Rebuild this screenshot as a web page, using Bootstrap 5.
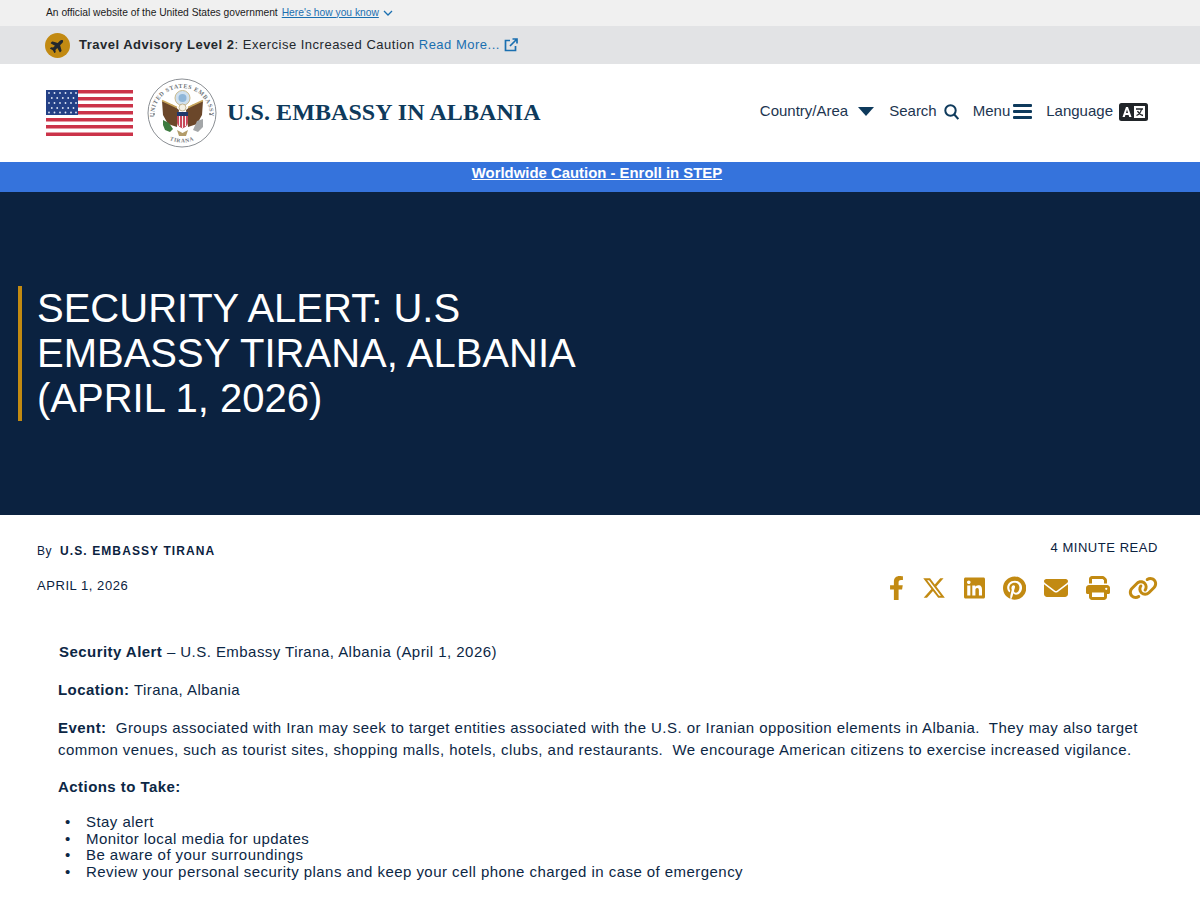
<!DOCTYPE html>
<html lang="en">
<head>
    <meta charset="UTF-8" />
    <meta name="viewport" content="width=device-width, initial-scale=1" />
    <title>Security Alert - U.S. Embassy in Albania</title>
    <link href="https://cdn.jsdelivr.net/npm/bootstrap@5.3.0/dist/css/bootstrap.min.css" rel="stylesheet">
    <style>
        body {
            font-family: "Liberation Sans", Arial, sans-serif;
            color: #0b2240;
            background: #fff;
        }
        a { color: inherit; }
        .gov-strip {
            height: 26px;
            padding-left: 46px;
            padding-bottom: 1px;
            background: #f0f0f0;
            font-size: 10.25px;
            color: #1b1b1b;
        }
        .gov-strip a { color: #1a6fb0; margin-left: 4px; }
        .advisory {
            height: 38px;
            padding-left: 45px;
            background: #e2e3e5;
            font-size: 13px;
            letter-spacing: .5px;
            color: #23282d;
        }
        .advisory-dot {
            width: 25px;
            height: 25px;
            border-radius: 50%;
            background: #c28a12;
            margin-right: 9px;
        }
        .advisory a { color: #1a6fb0; text-decoration: none; margin-left: 4px; }
        .site-head { height: 98px; padding: 0 52px 0 46px; }
        .seal { margin-left: 14px; margin-right: 10px; }
        .site-name {
            font-family: "Liberation Serif", "Times New Roman", serif;
            font-weight: 700;
            font-size: 24px;
            letter-spacing: .08px;
            color: #0e3a5c;
            margin-bottom: 2px;
        }
        .head-links { font-size: 15px; color: #1d3550; margin-top: -3px; }
        .head-links span { white-space: nowrap; }
        .ico-caret { margin: 0 15px 0 10px; }
        .ico-search { margin: 0 14px 0 7px; }
        .ico-menu { margin: 0 14px 0 3px; }
        .ico-lang { margin-left: 6px; }
        .alert-strip {
            height: 30px;
            background: #3573dc;
            color: #fff;
            font-size: 14.9px;
            font-weight: 700;
            padding: 0 6px 8px 0;
        }
        .hero {
            height: 323px;
            background: #0b2240;
            padding-left: 18px;
        }
        .hero-title {
            width: 580px;
            margin: 0;
            padding: 0 0 0 15px;
            border-left: 4px solid #c28a12;
            font-size: 40px;
            line-height: 45px;
            font-weight: 400;
            color: #fff;
        }
        .meta-wrap { padding: 23px 42px 0 37px; height: 126px; font-size: 13px; letter-spacing: .55px; }
        .meta-by { font-size: 12px; margin-top: 4px; }
        .meta-by b { letter-spacing: 1.1px; margin-left: 4px; }
        .meta-date { margin-top: 16px; }
        .share { gap: 0 18px; margin-top: 18px; }
        .share svg { fill: #c28a12; height: 24px; display: block; }
        .alert-copy {
            padding: 0 58px;
            font-size: 15px;
            line-height: 22px;
            letter-spacing: .45px;
            color: #0c2745;
        }
        .alert-copy p { margin: 0 0 16px; }
        .alert-copy .lead-in { padding-left: 1px; margin-bottom: 15.5px; }
        .alert-copy .event-para { margin-bottom: 15px; }
        .alert-copy .list-head { margin-bottom: 16.5px; }
        .alert-copy ul { margin: 0; padding-left: 28px; line-height: 16.7px; list-style: none; }
        .alert-copy li::before { content: "•"; display: inline-block; width: 21px; margin-left: -21px; }
    </style>
</head>
<body>

<div class="gov-strip d-flex align-items-center">
    <span>An official website of the United States government</span>
    <a href="#">Here's how you know</a>
    <svg class="ms-1" width="10" height="6" viewBox="0 0 10 6"><path d="M1 1l4 4 4-4" fill="none" stroke="#1a6fb0" stroke-width="1.3"/></svg>
</div>

<div class="advisory d-flex align-items-center">
    <div class="advisory-dot d-flex align-items-center justify-content-center">
        <svg width="15" height="15" viewBox="0 0 576 512" fill="#23282d"><path transform="rotate(-45 288 256)" d="M482.3 192c34.2 0 93.7 29 93.7 64c0 36-59.5 64-93.7 64l-116.6 0L265.2 495.9c-5.7 10-16.3 16.1-27.8 16.1l-56.2 0c-10.6 0-18.3-10.2-15.4-20.4l49-171.6L112 320 68.8 377.6c-3 4-7.8 6.4-12.8 6.4l-42 0c-7.8 0-14-6.3-14-14c0-1.3 .2-2.6 .5-3.9L32 256 .5 145.9c-.4-1.3-.5-2.6-.5-3.9c0-7.8 6.3-14 14-14l42 0c5 0 9.8 2.4 12.8 6.4L112 192l102.9 0-49-171.6C162.9 10.2 170.6 0 181.2 0l56.2 0c11.5 0 22.1 6.2 27.8 16.1L365.7 192l116.6 0z"/></svg>
    </div>
    <span><b>Travel Advisory Level 2</b>: Exercise Increased Caution</span>
    <a href="#">Read More...</a>
    <svg class="ms-1" width="14" height="14" viewBox="0 0 14 14" fill="none" stroke="#1a6fb0" stroke-width="1.7"><path d="M6 2.5H1.500v10h10V8M8.500 1H13v4.500M13 1L6 8"/></svg>
</div>

<header class="site-head d-flex align-items-center justify-content-between">
    <div class="d-flex align-items-center">
        <svg width="87" height="46" viewBox="0 0 87 46">
            <rect width="87" height="46" fill="#fff"/>
            <g fill="#cb3349">
                <rect y="0" width="87" height="3.500"/>
                <rect y="7" width="87" height="3.500"/>
                <rect y="14" width="87" height="3.500"/>
                <rect y="21" width="87" height="3.500"/>
                <rect y="28" width="87" height="3.500"/>
                <rect y="35" width="87" height="3.500"/>
                <rect y="42.500" width="87" height="3.500"/>
            </g>
            <rect width="32" height="25" fill="#234086"/>
            <g fill="#dfe6f5">
                <circle cx="3" cy="3" r=".9"/><circle cx="8.500" cy="3" r=".9"/><circle cx="14" cy="3" r=".9"/><circle cx="19.500" cy="3" r=".9"/><circle cx="25" cy="3" r=".9"/><circle cx="30" cy="3" r=".9"/>
                <circle cx="5.800" cy="8" r=".9"/><circle cx="11.200" cy="8" r=".9"/><circle cx="16.800" cy="8" r=".9"/><circle cx="22.200" cy="8" r=".9"/><circle cx="27.500" cy="8" r=".9"/>
                <circle cx="3" cy="13" r=".9"/><circle cx="8.500" cy="13" r=".9"/><circle cx="14" cy="13" r=".9"/><circle cx="19.500" cy="13" r=".9"/><circle cx="25" cy="13" r=".9"/><circle cx="30" cy="13" r=".9"/>
                <circle cx="5.800" cy="18" r=".9"/><circle cx="11.200" cy="18" r=".9"/><circle cx="16.800" cy="18" r=".9"/><circle cx="22.200" cy="18" r=".9"/><circle cx="27.500" cy="18" r=".9"/>
                <circle cx="3" cy="22.500" r=".9"/><circle cx="8.500" cy="22.500" r=".9"/><circle cx="14" cy="22.500" r=".9"/><circle cx="19.500" cy="22.500" r=".9"/><circle cx="25" cy="22.500" r=".9"/><circle cx="30" cy="22.500" r=".9"/>
            </g>
        </svg>
        <svg class="seal" width="70" height="70" viewBox="0 0 70 70">
            <circle cx="35" cy="35" r="34" fill="#fff" stroke="#8b8f94" stroke-width="1"/>
            <defs>
                <path id="seal-top" d="M7 38a28 28 0 0 1 56 0"/>
                <path id="seal-bot" d="M20 60.500a30 30 0 0 0 30 0"/>
            </defs>
            <text font-family="Liberation Serif, serif" font-size="6" font-weight="700" fill="#70757a" letter-spacing=".6"><textPath href="#seal-top" startOffset="50%" text-anchor="middle">UNITED STATES EMBASSY</textPath></text>
            <text font-family="Liberation Serif, serif" font-size="5.500" font-weight="700" fill="#70757a" letter-spacing=".6"><textPath href="#seal-bot" startOffset="50%" text-anchor="middle">TIRANA</textPath></text>
            <circle cx="35.500" cy="20" r="7.500" fill="#cfe0ef" stroke="#c9b98c" stroke-width="1"/>
            <circle cx="35.500" cy="20" r="4" fill="#8fb6d8"/>
            <path d="M32 32L26 27 15 23 16 37 21 46 30 49zM39 32L45 27 56 23 55 37 50 46 41 49z" fill="#6b472a"/>
            <path d="M15 22.500l15 7M56 22.500l-15 7" stroke="#c7a55c" stroke-width="1.600"/>
            <circle cx="35.500" cy="29.500" r="3.500" fill="#f4f1e6" stroke="#a88e55" stroke-width=".6"/>
            <path d="M30 34h11v10c0 3.500-3 5.500-5.500 6.500-2.500-1-5.500-3-5.500-6.500z" fill="#c9485a"/>
            <path d="M30 34h11v4H30z" fill="#20386b"/>
            <path d="M32.500 38v10M35.500 38v12M38.500 38v10" stroke="#f3f3f3" stroke-width="1"/>
            <path d="M16 42l6 3 4 6-3 3-5-2-2-5z" fill="#3d7a3f"/>
            <path d="M46 52l4-9 6-2 0 8-5 5z" fill="#a3a6a8"/>
            <path d="M30 52l5.500 3 5.500-3-2 6h-7z" fill="#b39c6a"/>
            <circle cx="7" cy="36" r=".9" fill="#70757a"/><circle cx="63" cy="36" r=".9" fill="#70757a"/>
        </svg>
        <div class="site-name">U.S. EMBASSY IN ALBANIA</div>
    </div>
    <div class="head-links d-flex align-items-center">
        <span>Country/Area</span>
        <svg class="ico-caret" width="16" height="9" viewBox="0 0 16 9" fill="#0e3a5c"><path d="M0 0h16L8 9z"/></svg>
        <span>Search</span>
        <svg class="ico-search" width="15" height="16" viewBox="0 0 15 16" fill="none" stroke="#0e3a5c" stroke-width="2"><circle cx="6.500" cy="6.500" r="5.200"/><path d="M10.300 10.500l4 4.500"/></svg>
        <span>Menu</span>
        <svg class="ico-menu" width="19" height="15" viewBox="0 0 19 15" fill="#0e3a5c"><rect width="19" height="3" rx="1"/><rect y="6" width="19" height="3" rx="1"/><rect y="12" width="19" height="3" rx="1"/></svg>
        <span>Language</span>
        <svg class="ico-lang" width="29" height="18" viewBox="0 0 29 18">
            <rect width="29" height="18" rx="2.500" fill="#212529"/>
            <rect x="15" y="3" width="11" height="12" fill="#fff"/>
            <path d="M3.500 14L7 4h2l3.500 10h-2.300l-.6-2H6.400l-.6 2zM7 10h2L8 6.500z" fill="#fff" fill-rule="evenodd"/>
            <path d="M17 6h7M22.500 6c-.5 3-2.500 5.500-5 6.500M18.500 8c1 2 3 4 5.500 4.500" fill="none" stroke="#212529" stroke-width="1.300"/>
        </svg>
    </div>
</header>

<div class="alert-strip d-flex align-items-center justify-content-center">
    <a href="#">Worldwide Caution - Enroll in STEP</a>
</div>

<section class="hero d-flex align-items-center">
    <h1 class="hero-title">SECURITY ALERT: U.S EMBASSY TIRANA, ALBANIA (APRIL 1, 2026)</h1>
</section>

<div class="meta-wrap d-flex justify-content-between">
    <div>
        <div class="meta-by">By <b>U.S. EMBASSY TIRANA</b></div>
        <div class="meta-date">APRIL 1, 2026</div>
    </div>
    <div class="text-end">
        <div>4 MINUTE READ</div>
        <div class="share d-flex align-items-center justify-content-end">
            <svg viewBox="0 0 320 512"><path d="M279.14 288l14.22-92.66h-88.91v-60.13c0-25.35 12.42-50.06 52.24-50.06h40.42V6.26S260.43 0 225.36 0c-73.22 0-121.08 44.38-121.08 124.72v70.62H22.89V288h81.39v224h100.17V288z"/></svg>
            <svg viewBox="0 0 512 512"><path d="M389.2 48h70.6L305.6 224.2 487 464H345L233.7 318.6 106.5 464H35.8L200.7 275.5 26.8 48H172.4L272.9 180.9 389.2 48zM364.4 421.8h39.1L151.1 88h-42L364.4 421.8z"/></svg>
            <svg viewBox="0 0 448 512"><path d="M416 32H31.9C14.3 32 0 46.5 0 64.3v383.4C0 465.5 14.3 480 31.9 480H416c17.6 0 32-14.5 32-32.3V64.3c0-17.8-14.4-32.3-32-32.3zM135.4 416H69V202.2h66.5V416zm-33.2-243c-21.3 0-38.5-17.3-38.5-38.5S80.9 96 102.2 96c21.2 0 38.5 17.3 38.5 38.5 0 21.3-17.2 38.5-38.5 38.5zm282.1 243h-66.4V312c0-24.8-.5-56.7-34.5-56.7-34.6 0-39.9 27-39.9 54.9V416h-66.4V202.2h63.7v29.2h.9c8.9-16.8 30.6-34.5 62.9-34.5 67.2 0 79.7 44.3 79.7 101.9V416z"/></svg>
            <svg viewBox="0 0 496 512"><path d="M496 256c0 137-111 248-248 248-25.6 0-50.2-3.9-73.4-11.1 10.1-16.5 25.2-43.5 30.8-65 3-11.6 15.4-59 15.4-59 8.1 15.4 31.7 28.5 56.8 28.5 74.8 0 128.7-68.8 128.7-154.3 0-81.9-66.9-143.2-152.9-143.2-107 0-163.9 71.8-163.9 150.1 0 36.4 19.4 81.7 50.3 96.1 4.7 2.2 7.2 1.2 8.3-3.3.8-3.4 5-20.3 6.9-28.1.6-2.5.3-4.7-1.7-7.1-10.1-12.5-18.3-35.3-18.3-56.6 0-54.7 41.4-107.6 112-107.6 60.9 0 103.6 41.5 103.6 100.9 0 67.1-33.9 113.6-78 113.6-24.3 0-42.6-20.1-36.7-44.8 7-29.5 20.5-61.3 20.5-82.6 0-19-10.2-34.9-31.4-34.9-24.9 0-44.9 25.7-44.9 60.2 0 22 7.4 36.8 7.4 36.8s-24.5 103.8-29 123.2c-5 21.4-3 51.6-.9 71.2C65.4 450.9 0 361.1 0 256 0 119 111 8 248 8s248 111 248 248z"/></svg>
            <svg viewBox="0 0 512 512"><path d="M48 64C21.5 64 0 85.5 0 112c0 15.1 7.1 29.3 19.2 38.4L236.8 313.6c11.4 8.5 27 8.5 38.4 0L492.8 150.4c12.1-9.1 19.2-23.3 19.2-38.4c0-26.5-21.5-48-48-48H48zM0 176V384c0 35.3 28.7 64 64 64H448c35.3 0 64-28.7 64-64V176L294.4 339.2c-22.8 17.1-54 17.1-76.8 0L0 176z"/></svg>
            <svg viewBox="0 0 512 512"><path d="M128 0C92.7 0 64 28.7 64 64v96h64V64H354.7L384 93.3V160h64V93.3c0-17-6.7-33.3-18.7-45.3L400 18.7C388 6.7 371.7 0 354.7 0H128zM384 352v32 64H128V384 368 352H384zm64 32h32c17.7 0 32-14.3 32-32V256c0-35.3-28.7-64-64-64H64c-35.3 0-64 28.7-64 64v96c0 17.7 14.3 32 32 32H64v64c0 35.3 28.7 64 64 64H384c35.3 0 64-28.7 64-64V384zM432 248a24 24 0 1 1 0 48 24 24 0 1 1 0-48z"/></svg>
            <svg viewBox="0 0 640 512"><path d="M579.8 267.7c56.5-56.5 56.5-148 0-204.5c-50-50-128.8-56.5-186.3-15.4l-1.6 1.1c-14.4 10.3-17.7 30.3-7.4 44.6s30.3 17.7 44.6 7.4l1.6-1.1c32.1-22.9 76-19.3 103.8 8.6c31.5 31.5 31.5 82.5 0 114L422.3 334.8c-31.5 31.5-82.5 31.5-114 0c-27.9-27.9-31.5-71.8-8.6-103.8l1.1-1.6c10.3-14.4 6.9-34.4-7.4-44.6s-34.4-6.9-44.6 7.4l-1.1 1.6C206.5 251.2 213 330 263 380c56.5 56.5 148 56.5 204.5 0L579.8 267.7zM60.2 244.3c-56.5 56.5-56.5 148 0 204.5c50 50 128.8 56.5 186.3 15.4l1.6-1.1c14.4-10.3 17.7-30.3 7.4-44.6s-30.3-17.7-44.6-7.4l-1.6 1.1c-32.1 22.9-76 19.3-103.8-8.6C74 372 74 321 105.5 289.5L217.7 177.2c31.5-31.5 82.500-31.5 114 0c27.9 27.9 31.5 71.8 8.6 103.9l-1.1 1.6c-10.3 14.4-6.9 34.4 7.4 44.6s34.4 6.9 44.6-7.4l1.1-1.6C433.5 260.8 427 182 377 132c-56.5-56.5-148-56.5-204.5 0L60.2 244.3z"/></svg>
        </div>
    </div>
</div>

<main class="alert-copy">
    <p class="lead-in"><b>Security Alert</b> – U.S. Embassy Tirana, Albania (April 1, 2026)</p>
    <p><b>Location:</b> Tirana, Albania</p>
    <p class="event-para"><b>Event:</b>&nbsp; Groups associated with Iran may seek to target entities associated with the U.S. or Iranian opposition elements in Albania.&nbsp; They may also target common venues, such as tourist sites, shopping malls, hotels, clubs, and restaurants.&nbsp; We encourage American citizens to exercise increased vigilance.</p>
    <p class="list-head"><b>Actions to Take:</b></p>
    <ul>
        <li>Stay alert</li>
        <li>Monitor local media for updates</li>
        <li>Be aware of your surroundings</li>
        <li>Review your personal security plans and keep your cell phone charged in case of emergency</li>
    </ul>
</main>

<script src="https://cdn.jsdelivr.net/npm/bootstrap@5.3.0/dist/js/bootstrap.bundle.min.js"></script>
</body>
</html>
